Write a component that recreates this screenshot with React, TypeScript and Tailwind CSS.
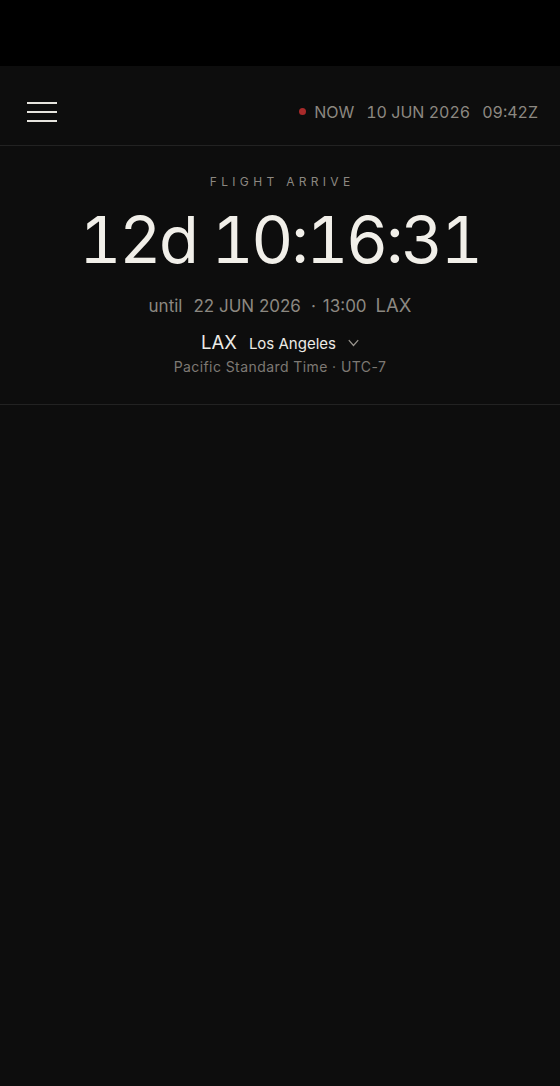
import React from "react";

export default function App() {
  return (
    <div className="min-h-[1086px] w-[560px] bg-[#0d0d0d] flex flex-col" style={{ fontFamily: "Inter, 'Noto Sans', sans-serif" }}>
      <div className="h-[66px] bg-black" />
      <header className="h-[80px] flex items-center justify-between pt-[12px] pl-[27px] pr-[22px] border-b border-[#222222]">
        <div className="flex flex-col gap-[7px] w-[30px]">
          <div className="h-[2px] bg-[#e6e4de]" />
          <div className="h-[2px] bg-[#e6e4de]" />
          <div className="h-[2px] bg-[#e6e4de]" />
        </div>
        <div className="flex items-center text-[16px] leading-[24px] text-[#8c8881] tabular-nums">
          <span className="w-[7px] h-[7px] rounded-full bg-[#a82a2a] mr-[8px]" />
          <span>NOW</span>
          <span className="ml-[12px]">10 JUN 2026</span>
          <span className="ml-[12px]">09:42Z</span>
        </div>
      </header>
      <section className="flex flex-col items-center border-b border-[#222222] pt-[28px] pb-[27px]">
        <div className="text-[12px] leading-[16px] tracking-[0.36em] text-[#8c8881] pl-[0.36em]">FLIGHT ARRIVE</div>
        <div className="mt-[10px] text-[65px] leading-[80px] text-[#f1efe9] font-normal tabular-nums tracking-[-0.036em]">12d 10:16:31</div>
        <div className="mt-[13px] flex items-baseline text-[#8c8881] leading-[24px]">
          <span className="text-[17px]">until</span>
          <span className="ml-[11px] text-[17px]">22 JUN 2026</span>
          <span className="ml-[10px] mr-[7px] text-[17px]">·</span>
          <span className="text-[17px]">13:00</span>
          <span className="ml-[9px] text-[18.5px]">LAX</span>
        </div>
        <div className="mt-[12px] flex items-baseline text-[#eceae5] leading-[24px]">
          <span className="text-[18.5px]">LAX</span>
          <span className="ml-[12px] text-[15px]">Los Angeles</span>
          <svg className="ml-[12px] self-center" width="11" height="8" viewBox="0 0 11 8" fill="none">
            <path d="M0.8 1.2 L5.5 6.5 L10.2 1.2" stroke="#9a968f" strokeWidth="1.2" />
          </svg>
        </div>
        <div className="mt-[1px] text-[14px] leading-[20px] text-[#7d7974] tracking-[0.03em]">Pacific Standard Time · UTC-7</div>
      </section>
    </div>
  );
}
